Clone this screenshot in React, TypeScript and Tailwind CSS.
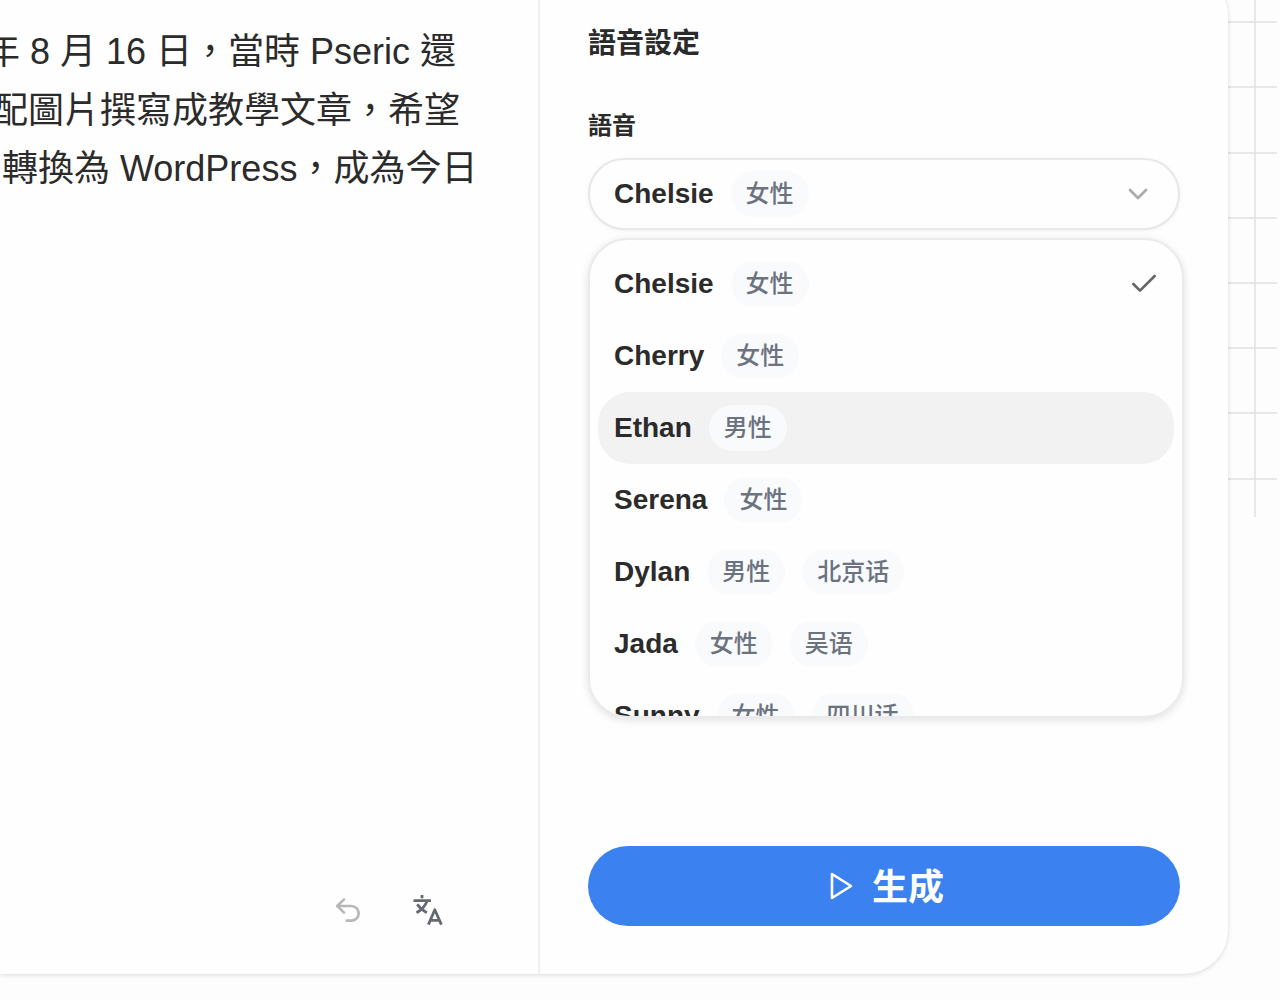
import { useState } from "react";
import { Check, ChevronDown, Undo2 } from "lucide-react";

type Voice = {
  name: string;
  tags: string[];
};

const voices: Voice[] = [
  { name: "Chelsie", tags: ["女性"] },
  { name: "Cherry", tags: ["女性"] },
  { name: "Ethan", tags: ["男性"] },
  { name: "Serena", tags: ["女性"] },
  { name: "Dylan", tags: ["男性", "北京话"] },
  { name: "Jada", tags: ["女性", "吴语"] },
  { name: "Sunny", tags: ["女性", "四川话"] },
];

const gridRows = [22, 87, 153, 218, 283, 348, 413, 479];

function TranslateIcon() {
  return (
    <svg
      viewBox="0 0 32 32"
      className="size-8"
      fill="none"
      stroke="currentColor"
      strokeWidth="2.8"
      strokeLinejoin="round"
      aria-hidden="true"
    >
      <path d="M1.5 6.7h17.5M10 1v3.2" />
      <path d="M15 7.2c-1.8 4.600-5.2 8.600-10.500 11.600" />
      <path d="M5.2 10.400c2.400 3.400 5.400 6.200 9.600 8.400" />
      <path d="m16.400 30.600 6.400-14.800 6.600 14.800M18.400 26.400h9" />
    </svg>
  );
}

function PlayIcon() {
  return (
    <svg
      viewBox="0 0 32 32"
      className="size-8"
      fill="none"
      stroke="currentColor"
      strokeWidth="2.6"
      strokeLinejoin="round"
      aria-hidden="true"
    >
      <path d="M8 4v24l19-12z" />
    </svg>
  );
}

function VoiceLabel({ voice }: { voice: Voice }) {
  return (
    <span className="flex items-center gap-[17px]">
      <span className="text-[28px] font-bold text-[#2b2b2b]">{voice.name}</span>
      {voice.tags.map((tag) => (
        <span
          key={tag}
          lang="zh-Hans"
          className="rounded-full bg-[#f9fafc] px-[15px] py-[5px] text-2xl leading-9 font-medium text-[#6b7280]"
        >
          {tag}
        </span>
      ))}
    </span>
  );
}

export default function App() {
  const [selected, setSelected] = useState(0);
  const [highlighted, setHighlighted] = useState(2);
  const [open, setOpen] = useState(true);

  return (
    <main
      lang="zh-Hant"
      className="relative flex min-h-screen flex-col overflow-hidden bg-[#fdfdfd] pr-[52px] pb-[26px] font-['Liberation_Sans','Noto_Sans_CJK_TC',sans-serif] text-[#2b2b2b]"
    >
      {/* Background grid */}
      <svg
        className="absolute top-0 right-0 h-[518px] w-[60px]"
        viewBox="0 0 60 518"
        stroke="#e0e0e0"
        strokeWidth="1.5"
        aria-hidden="true"
      >
        {gridRows.map((y) => (
          <path key={y} d={`M0 ${y}h57`} />
        ))}
        <path d="M35 0v517" />
      </svg>

      <div className="relative -mt-7 grid flex-1 grid-cols-[540fr_688fr] rounded-r-[44px] bg-[#fefefe] shadow-[0_1px_5px_rgba(0,0,0,0.14)]">
        {/* Text editor */}
        <section className="flex min-w-0 flex-col justify-between overflow-hidden border-r-2 border-[#f0f0f0] pt-[51px]">
          <div className="text-4xl leading-relaxed whitespace-nowrap">
            <p className="-indent-4">年 8 月 16 日，當時 Pseric 還</p>
            <p className="-indent-2">配圖片撰寫成教學文章，希望</p>
            <p className="indent-0.5">轉換為 WordPress，成為今日</p>
          </div>
          <div className="flex items-center justify-end gap-12 pr-[94px] pb-12">
            <button type="button" aria-label="復原" className="text-[#b8b8b8]">
              <Undo2 className="size-8" />
            </button>
            <button type="button" aria-label="翻譯" className="text-[#666a70]">
              <TranslateIcon />
            </button>
          </div>
        </section>

        {/* Voice settings */}
        <section className="flex min-w-0 flex-col px-12 pt-[52px] pb-12">
          <h2 className="text-[28px] leading-10 font-bold">語音設定</h2>
          <p id="voice-label" className="mt-11 text-2xl leading-9 font-bold">
            語音
          </p>

          <div className="relative mt-3.5">
            <button
              type="button"
              role="combobox"
              aria-labelledby="voice-label"
              aria-expanded={open}
              aria-controls="voice-list"
              onClick={() => setOpen(!open)}
              className="flex h-[72px] w-full items-center justify-between rounded-full border-2 border-[#e8e8e8] bg-[#fefefe] px-6 shadow-[0_1px_4px_rgba(0,0,0,0.05)]"
            >
              <VoiceLabel voice={voices[selected]} />
              <ChevronDown className="size-8 text-[#ababab]" strokeWidth={2} />
            </button>

            {open && (
              <ul
                id="voice-list"
                role="listbox"
                aria-labelledby="voice-label"
                className="absolute top-full -right-1 left-0 z-10 mt-2 h-[480px] overflow-hidden rounded-[40px] border-2 border-[#ebebeb] bg-[#fefefe] p-2 shadow-[0_2px_8px_rgba(0,0,0,0.12)]"
              >
                {voices.map((voice, index) => (
                  <li key={voice.name} role="presentation">
                    <button
                      type="button"
                      role="option"
                      aria-selected={index === selected}
                      onMouseEnter={() => setHighlighted(index)}
                      onClick={() => {
                        setSelected(index);
                        setOpen(false);
                      }}
                      className={`flex h-[72px] w-full items-center justify-between rounded-[32px] pr-3.5 pl-4 ${
                        index === highlighted ? "bg-[#f2f2f2]" : ""
                      }`}
                    >
                      <VoiceLabel voice={voice} />
                      {index === selected && (
                        <Check className="size-8 text-[#666]" strokeWidth={2} />
                      )}
                    </button>
                  </li>
                ))}
              </ul>
            )}
          </div>

          <button
            type="button"
            className="mt-auto flex h-20 w-full items-center justify-center gap-4 rounded-full bg-[#3b82f0] text-4xl font-bold text-white"
          >
            <PlayIcon />
            <span className="pt-1">生成</span>
          </button>
        </section>
      </div>
    </main>
  );
}
